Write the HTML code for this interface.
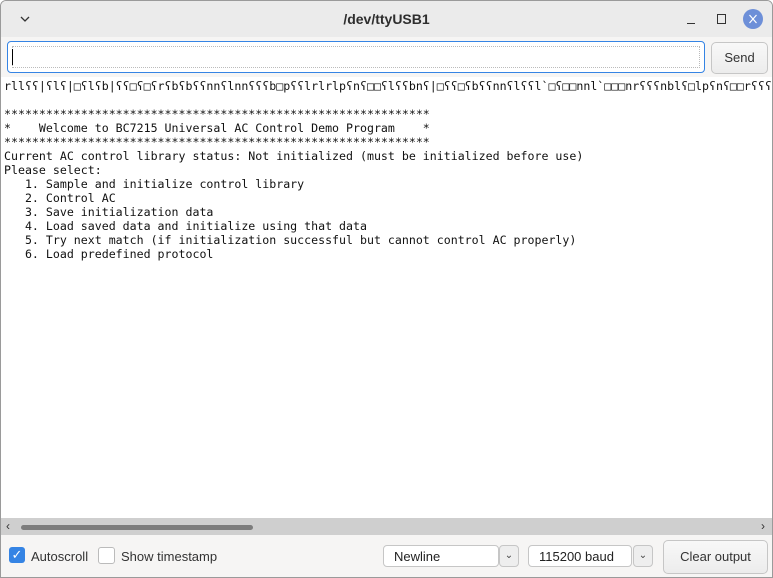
<!DOCTYPE html>
<html><head><style>
body{margin:0;width:773px;height:578px;overflow:hidden;font-family:"Liberation Sans","DejaVu Sans",sans-serif;background:#fff;position:relative}
.win{position:absolute;left:0;top:0;width:771px;height:576px;border:1px solid #9a9a9a;border-radius:6px 6px 0 0;overflow:hidden;background:#f6f5f4}
.title{position:absolute;left:0;top:0;width:771px;height:36px;background:#ebebeb;text-align:center;line-height:36px;font-size:14px;font-weight:bold;color:#2e2e2e}
.inp{position:absolute;left:6px;top:40px;width:696px;height:30px;border:1px solid #3584e4;border-radius:4px;background:#fff}
.inp .in2{position:absolute;left:4px;top:4px;right:4px;bottom:4px;border:1px dotted #bbb}
.caret{position:absolute;left:11px;top:48px;width:1px;height:16px;background:#000}
.btn{position:absolute;border:1px solid #c6c6c6;border-radius:5px;background:linear-gradient(#f8f8f8,#ececec);font-size:13px;color:#333;text-align:center}
.out{position:absolute;left:0;top:76px;width:771px;height:441px;background:#fff}
pre{margin:0;position:absolute;left:3px;top:2px;font-family:"DejaVu Sans Mono",monospace;font-size:11.6px;line-height:14px;color:#111}
.sb{position:absolute;left:0;top:517px;width:771px;height:17px;background:#cfcfcf}
.thumb{position:absolute;left:20px;top:524px;width:232px;height:5px;border-radius:3px;background:#7d7d7d}
.lbl{position:absolute;font-size:13px;color:#333;top:548px}
.sel{position:absolute;top:544px;height:22px;border:1px solid #c6c6c6;border-radius:4px;background:#fff;font-size:13px;color:#222;line-height:22px;padding-left:10px;box-sizing:border-box}
.dd{position:absolute;top:544px;width:20px;height:22px;border:1px solid #c6c6c6;border-radius:4px;background:#eee;box-sizing:border-box;font-size:10px;text-align:center;line-height:20px;color:#444}
</style></head><body>
<div class="win">
<div class="title">/dev/ttyUSB1</div>
<svg style="position:absolute;left:18px;top:13px" width="12" height="10"><path d="M2 3l4 4 4-4" stroke="#333" stroke-width="1.3" fill="none"/></svg>
<div style="position:absolute;left:686px;top:22px;width:8px;height:1px;background:#333"></div>
<div style="position:absolute;left:716px;top:13px;width:7px;height:8px;border:1px solid #333"></div>
<div style="position:absolute;left:742px;top:8px;width:20px;height:20px;border-radius:50%;background:#6d8fd8"></div>
<svg style="position:absolute;left:742px;top:8px" width="20" height="20"><path d="M6.5 6l7 8M13.5 6l-7 8" stroke="#fff" stroke-width="1.2"/></svg>
<div class="inp"><div class="in2"></div></div>
<div class="caret"></div>
<div class="btn" style="left:710px;top:41px;width:55px;height:30px;line-height:30px">Send</div>
<div class="out"><pre>rllʕʕ|ʕlʕ|□ʕlʕb|ʕʕ□ʕ□ʕrʕbʕbʕʕnnʕlnnʕʕʕb□pʕʕlrlrlpʕnʕ□□ʕlʕʕbnʕ|□ʕʕ□ʕbʕʕnnʕlʕʕl`□ʕ□□nnl`□□□nrʕʕʕnblʕ□lpʕnʕ□□rʕʕʕ

*************************************************************
*    Welcome to BC7215 Universal AC Control Demo Program    *
*************************************************************
Current AC control library status: Not initialized (must be initialized before use)
Please select:
   1. Sample and initialize control library
   2. Control AC
   3. Save initialization data
   4. Load saved data and initialize using that data
   5. Try next match (if initialization successful but cannot control AC properly)
   6. Load predefined protocol</pre></div>
<div class="sb"></div><div class="thumb"></div>
<div style="position:absolute;left:5px;top:518px;font-size:12px;color:#333">‹</div>
<div style="position:absolute;left:760px;top:518px;font-size:12px;color:#333">›</div>
<div style="position:absolute;left:8px;top:546px;width:16px;height:16px;border-radius:3px;background:#3584e4;color:#fff;font-size:13px;text-align:center;line-height:16px">✓</div>
<div class="lbl" style="left:30px">Autoscroll</div>
<div style="position:absolute;left:97px;top:546px;width:15px;height:15px;border:1px solid #bbb;border-radius:3px;background:#fff"></div>
<div class="lbl" style="left:120px">Show timestamp</div>
<div class="sel" style="left:382px;width:116px">Newline</div>
<div class="dd" style="left:498px">⌄</div>
<div class="sel" style="left:527px;width:104px">115200 baud</div>
<div class="dd" style="left:632px">⌄</div>
<div class="btn" style="left:662px;top:539px;width:103px;height:32px;line-height:32px">Clear output</div>
</div>
</body></html>
